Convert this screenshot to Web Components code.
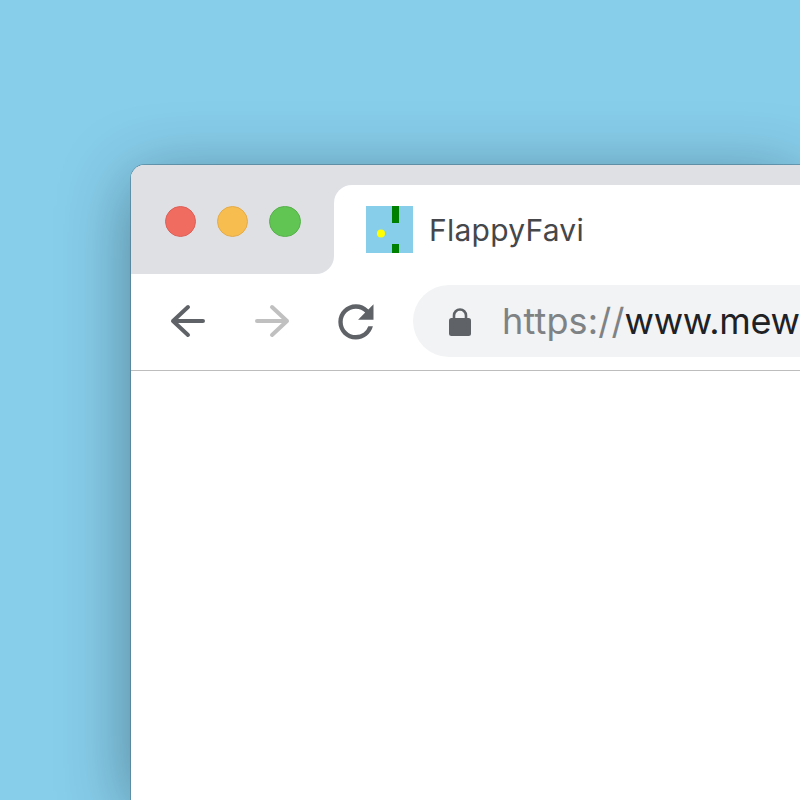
<!DOCTYPE html>
<html>
<head>
<meta charset="utf-8">
<title>FlappyFavi</title>
<style>
  html, body { margin: 0; height: 100%; overflow: hidden; }
  body {
    width: 800px;
    height: 800px;
    background: #87ceeb;
    padding: 165px 0 0 131px;
    box-sizing: border-box;
    font-family: Inter, "Liberation Sans", sans-serif;
  }
</style>
</head>
<body>
<browser-window>
  <browser-tab slot="tab" title-text="FlappyFavi"></browser-tab>
  <tool-bar slot="toolbar"></tool-bar>
</browser-window>

<script>
class WindowControls extends HTMLElement {
  constructor() {
    super();
    this.attachShadow({ mode: "open" }).innerHTML = `
      <style>
        :host {
          display: flex;
          gap: 21px;
          width: 203px;
          height: 109px;
          box-sizing: border-box;
          padding: 41px 0 0 33.7px;
          background: #dfe0e4;
          border-top-left-radius: 14px;
          border-bottom-right-radius: 18px;
        }
        i { display: block; width: 31.4px; height: 31.4px; box-sizing: border-box; border-radius: 50%; border: 1px solid; }
        .close { background: #f16c60; border-color: #dd6058; }
        .min { background: #f8bd4f; border-color: #e4ab4a; }
        .max { background: #61c554; border-color: #58b04c; }
      </style>
      <i class="close"></i><i class="min"></i><i class="max"></i>`;
  }
}

class BrowserTab extends HTMLElement {
  constructor() {
    super();
    const title = this.getAttribute("title-text");
    this.attachShadow({ mode: "open" }).innerHTML = `
      <style>
        :host {
          display: flex;
          align-items: center;
          gap: 16px;
          flex: 1;
          margin-top: 20px;
          height: 89px;
          box-sizing: border-box;
          padding-left: 32px;
          background: #fff;
          border-top-left-radius: 18px;
        }
        svg { display: block; width: 47px; height: 47px; }
        span { font-size: 30px; letter-spacing: .25px; color: #45474b; }
      </style>
      <svg viewBox="0 0 47 47">
        <rect width="47" height="47" fill="#87ceeb"/>
        <rect x="26" width="7" height="17" fill="#008000"/>
        <rect x="26" y="38" width="7" height="9" fill="#008000"/>
        <circle cx="15" cy="27.5" r="4" fill="#ffff00"/>
      </svg>
      <span>${title}</span>`;
  }
}

class NavIcon extends HTMLElement {
  static paths = {
    back: `<path d="M43 26H13M13 26L28 12M13 26L28 40" fill="none" stroke="currentColor" stroke-width="4" stroke-linecap="round" stroke-linejoin="round"/>`,
    forward: `<path d="M13 26H43M43 26L28 12M43 26L28 40" fill="none" stroke="currentColor" stroke-width="4" stroke-linecap="round" stroke-linejoin="round"/>`,
    reload: `<path transform="translate(.5 .5) scale(2.2)" fill="currentColor" d="M17.65 6.35A7.958 7.958 0 0 0 12 4c-4.42 0-7.99 3.58-7.99 8s3.57 8 7.99 8c3.73 0 6.84-2.55 7.73-6h-2.08A5.99 5.99 0 0 1 12 18c-3.31 0-6-2.69-6-6s2.69-6 6-6c1.66 0 3.14.69 4.22 1.78L13 11h7V4l-2.35 2.35z"/>`
  };
  constructor() {
    super();
    const name = this.getAttribute("name");
    this.attachShadow({ mode: "open" }).innerHTML = `
      <style>
        :host { display: block; width: 53px; height: 53px; color: #5f6368; }
        :host([disabled]) { color: #c0c0c0; }
        svg { display: block; width: 53px; height: 53px; }
      </style>
      <svg viewBox="0 0 53 53">${NavIcon.paths[name]}</svg>`;
  }
}

class OmniBox extends HTMLElement {
  constructor() {
    super();
    this.attachShadow({ mode: "open" }).innerHTML = `
      <style>
        :host {
          display: flex;
          align-items: center;
          flex: 1;
          height: 72px;
          box-sizing: border-box;
          padding-left: 36px;
          gap: 31px;
          background: #f1f3f4;
          border-radius: 36px 0 0 36px;
          overflow: hidden;
          white-space: nowrap;
        }
        svg { display: block; width: 22px; height: 28px; flex: none; margin-top: 2px; }
        span { font-size: 36px; letter-spacing: -.35px; color: #202124; }
        b { font-weight: 400; letter-spacing: .15px; color: #7f8285; }
      </style>
      <svg viewBox="0 0 22 28">
        <path d="M5 11V7.5a6 6 0 0 1 12 0V11" fill="none" stroke="#5f6368" stroke-width="2.6"/>
        <rect y="10" width="22" height="18" rx="2.5" fill="#5f6368"/>
      </svg>
      <span><b>https://</b>www.mew</span>`;
  }
}

class ToolBar extends HTMLElement {
  constructor() {
    super();
    this.attachShadow({ mode: "open" }).innerHTML = `
      <style>
        :host {
          display: flex;
          align-items: center;
          gap: 31px;
          height: 97px;
          box-sizing: border-box;
          padding: 0 0 2px 29px;
          background: #fff;
          border-bottom: 1px solid #bdbdbd;
        }
        nav-icon[name="reload"] { margin-left: 1px; }
      </style>
      <nav-icon name="back"></nav-icon>
      <nav-icon name="forward" disabled></nav-icon>
      <nav-icon name="reload"></nav-icon>
      <omni-box></omni-box>`;
  }
}

class BrowserWindow extends HTMLElement {
  constructor() {
    super();
    this.attachShadow({ mode: "open" }).innerHTML = `
      <style>
        :host {
          display: block;
          width: 669px;
          height: 635px;
          background: #fff;
          border-radius: 14px 0 0 0;
          box-shadow: 0 0 0 1px rgba(60, 90, 110, .4), 0 14px 70px rgba(0, 0, 0, .38);
        }
        .strip {
          display: flex;
          height: 109px;
          background: linear-gradient(#dfe0e4 50%, #fff 50%);
          border-radius: 14px 0 0 0;
        }
      </style>
      <div class="strip">
        <window-controls></window-controls>
        <slot name="tab"></slot>
      </div>
      <slot name="toolbar"></slot>`;
  }
}

customElements.define("window-controls", WindowControls);
customElements.define("browser-tab", BrowserTab);
customElements.define("nav-icon", NavIcon);
customElements.define("omni-box", OmniBox);
customElements.define("tool-bar", ToolBar);
customElements.define("browser-window", BrowserWindow);
</script>
</body>
</html>
